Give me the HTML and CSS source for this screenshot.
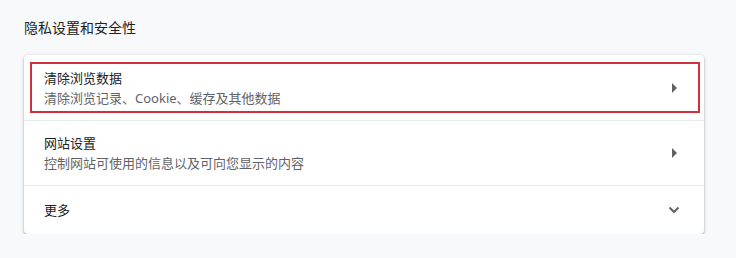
FILE: index.html
```html
<!DOCTYPE html>
<html lang="zh-CN">
<head>
<meta charset="utf-8">
<link rel="stylesheet" href="styles.css">
</head>
<body>
<div class="page">
  <h2 class="heading">隐私设置和安全性</h2>
  <div class="card">
    <div class="row row-tall highlighted">
      <div class="texts">
        <div class="title">清除浏览数据</div>
        <div class="sub">清除浏览记录、Cookie、缓存及其他数据</div>
      </div>
      <div class="icon"><span class="tri"></span></div>
      <div class="mark"></div>
    </div>
    <div class="row row-tall">
      <div class="texts">
        <div class="title">网站设置</div>
        <div class="sub">控制网站可使用的信息以及可向您显示的内容</div>
      </div>
      <div class="icon"><span class="tri"></span></div>
    </div>
    <div class="row row-short">
      <div class="texts">
        <div class="title">更多</div>
      </div>
      <div class="icon">
        <svg width="12" height="8" viewBox="0 0 12 8"><path d="M1.5 1.5 L6 6 L10.5 1.5" fill="none" stroke="#5f6368" stroke-width="2"/></svg>
      </div>
    </div>
  </div>
</div>
</body>
</html>
```

FILE: styles.css
```css
html, body {
  margin: 0;
  padding: 0;
  background: #f8f9fa;
}
body {
  font-family: "Noto Sans", "Noto Sans CJK SC", sans-serif;
  color: #202124;
}
.page {
  padding: 18px 32px 0 24px;
}
.heading {
  margin: 0 0 17px 0;
  font-size: 14px;
  font-weight: 400;
  line-height: 20px;
  color: #202124;
}
.card {
  background: #fff;
  border-radius: 4px;
  box-shadow: 0 1px 2px rgba(60, 64, 67, 0.3), 0 1px 3px 1px rgba(60, 64, 67, 0.15);
}
.row {
  position: relative;
  display: flex;
  align-items: center;
  padding: 0 20px;
  border-top: 1px solid #e8eaed;
}
.row:first-child {
  border-top: none;
}
.row-tall {
  height: 64px;
}
.row:first-child.row-tall {
  height: 65px;
}
.row-short {
  height: 48px;
}
.texts {
  flex: 1;
  display: flex;
  flex-direction: column;
}
.title {
  font-size: 13px;
  line-height: 20px;
  color: #202124;
}
.sub {
  font-size: 13px;
  line-height: 20px;
  color: #5f6368;
}
.icon {
  width: 20px;
  display: flex;
  justify-content: center;
  align-items: center;
}
.tri {
  width: 0;
  height: 0;
  border-top: 5px solid transparent;
  border-bottom: 5px solid transparent;
  border-left: 5px solid #5f6368;
}
.mark {
  position: absolute;
  top: 7px;
  left: 6px;
  right: 4px;
  bottom: 7px;
  border: 2px solid #d0303a;
  pointer-events: none;
}
```
